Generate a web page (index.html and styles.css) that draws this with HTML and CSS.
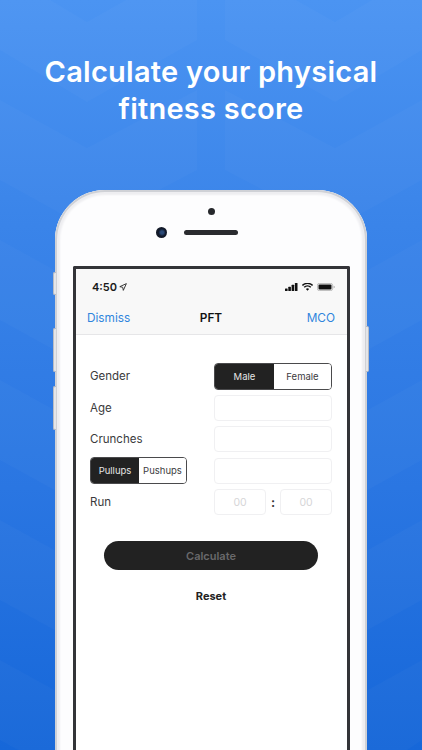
FILE: index.html
```html
<!DOCTYPE html>
<html lang="en">
<head>
<meta charset="utf-8">
<title>PFT</title>
<link rel="stylesheet" href="styles.css">
</head>
<body>
<main class="page">
  <svg class="pattern" viewBox="0 0 422 750" aria-hidden="true">
    <g fill="#fff" fill-opacity=".025">
      <path d="M0-30 87 22 197-40V40L87 102 0 50Z"/>
      <path d="M225-40 335 22 422-30V50L335 102 225 40Z"/>
      <path d="M0 100 87 148 197 90V170L87 228 0 180Z"/>
      <path d="M225 90 335 148 422 100V180L335 228 225 170Z"/>
      <path d="M0 240 87 288 197 230V310L87 368 0 320Z"/>
      <path d="M225 230 335 288 422 240V320L335 368 225 310Z"/>
      <path d="M0 380 87 428 197 370V450L87 508 0 460Z"/>
      <path d="M225 370 335 428 422 380V460L335 508 225 450Z"/>
      <path d="M0 520 87 568 197 510V590L87 648 0 600Z"/>
      <path d="M225 510 335 568 422 520V600L335 648 225 590Z"/>
      <path d="M0 660 87 708 197 650V730L87 788 0 740Z"/>
      <path d="M225 650 335 708 422 660V740L335 798 225 730Z"/>
    </g>
  </svg>

  <h1 class="headline">Calculate your physical<br>fitness score</h1>

  <section class="phone">
    <span class="side-btn side-mute"></span>
    <span class="side-btn side-up"></span>
    <span class="side-btn side-down"></span>
    <span class="side-btn side-power"></span>

    <div class="phone-top">
      <span class="sensor"></span>
      <div class="cam-row">
        <span class="camera"></span>
        <span class="speaker"></span>
      </div>
    </div>

    <div class="screen">
      <header class="chrome">
        <div class="status">
          <span class="time">4:50
            <svg class="loc" viewBox="0 0 10 10" aria-hidden="true"><path d="M9.2.8 1 4.6l3.6.7.8 3.9Z" fill="none" stroke="#222" stroke-width="1.1" stroke-linejoin="round"/></svg>
          </span>
          <span class="status-icons">
            <svg class="signal" viewBox="0 0 13 8" aria-hidden="true"><g fill="#111"><rect x="0" y="5.4" width="2.6" height="2.6" rx=".5"/><rect x="3.3" y="3.8" width="2.6" height="4.2" rx=".5"/><rect x="6.6" y="1.8" width="2.6" height="6.2" rx=".5"/><rect x="9.9" y="0" width="2.6" height="8" rx=".5"/></g></svg>
            <svg class="wifi" viewBox="0 0 12 9" aria-hidden="true"><path d="M6 8.6 4.2 6.7a2.6 2.6 0 0 1 3.6 0ZM2.9 5.4 1.7 4.2a6.2 6.2 0 0 1 8.6 0L9.1 5.4a4.5 4.5 0 0 0-6.2 0ZM.8 3.3-.2 2.1a8.9 8.9 0 0 1 12.4 0l-1 1.2a7.4 7.4 0 0 0-10.4 0Z" fill="#111"/></svg>
            <svg class="battery" viewBox="0 0 18 8" aria-hidden="true"><rect x=".4" y=".4" width="15.2" height="7.2" rx="2" fill="none" stroke="#aaa" stroke-width=".8"/><rect x="1.5" y="1.5" width="13" height="5" rx="1" fill="#111"/><path d="M16.6 2.7c.8.2 1.2.7 1.2 1.3s-.4 1.1-1.2 1.3Z" fill="#aaa"/></svg>
          </span>
        </div>
        <nav class="navbar">
          <a class="nav-link">Dismiss</a>
          <strong class="nav-title">PFT</strong>
          <a class="nav-link nav-right">MCO</a>
        </nav>
      </header>

      <div class="content">
        <form class="form">
          <div class="row">
            <span class="label">Gender</span>
            <div class="seg seg-wide"><span class="seg-on">Male</span><span class="seg-off">Female</span></div>
          </div>
          <div class="row">
            <span class="label">Age</span>
            <div class="field"></div>
          </div>
          <div class="row">
            <span class="label">Crunches</span>
            <div class="field"></div>
          </div>
          <div class="row">
            <div class="seg seg-narrow"><span class="seg-on">Pullups</span><span class="seg-off">Pushups</span></div>
            <div class="field"></div>
          </div>
          <div class="row">
            <span class="label">Run</span>
            <div class="run">
              <div class="field field-time">00</div>
              <span class="colon">:</span>
              <div class="field field-time">00</div>
            </div>
          </div>
        </form>
        <button class="calc" type="button">Calculate</button>
        <button class="reset" type="button">Reset</button>
      </div>
    </div>
  </section>
</main>
</body>
</html>
```
FILE: styles.css
```css
* { box-sizing: border-box; }
html, body { margin: 0; padding: 0; }
body {
  width: 422px;
  height: 750px;
  overflow: hidden;
  font-family: "Inter", "Liberation Sans", sans-serif;
}
.page {
  position: relative;
  width: 422px;
  height: 750px;
  overflow: hidden;
  background: linear-gradient(180deg, #4b94f2 0%, #3a84e9 30%, #2a76e2 65%, #1667d9 100%);
  display: flex;
  flex-direction: column;
  align-items: center;
}
.pattern { position: absolute; inset: 0; width: 422px; height: 750px; }
.headline {
  position: relative;
  flex: none;
  margin: 53px 0 0;
  height: 137px;
  font-size: 29px;
  line-height: 37px;
  font-weight: 600;
  letter-spacing: .25px;
  color: #fff;
  text-align: center;
  white-space: nowrap;
}
.phone {
  position: relative;
  width: 312px;
  height: 600px;
  flex: none;
  padding: 0 17px 0 18px;
  background: #fdfdfe;
  border-radius: 50px 50px 0 0;
  box-shadow: inset 0 0 0 2px #cfd1d6, inset 0 0 2px 5px #eeeef1;
}
.side-btn {
  position: absolute;
  width: 3px;
  background: #e4e5e8;
  border: 1px solid #b9bcc4;
}
.side-mute { left: -2px; top: 82px; height: 23px; border-radius: 2px 0 0 2px; border-right: 0; }
.side-up { left: -2px; top: 138px; height: 44px; border-radius: 2px 0 0 2px; border-right: 0; }
.side-down { left: -2px; top: 196px; height: 44px; border-radius: 2px 0 0 2px; border-right: 0; }
.side-power { right: -2px; top: 136px; height: 46px; border-radius: 0 2px 2px 0; border-left: 0; }
.phone-top {
  height: 76px;
  padding-top: 18px;
  display: flex;
  flex-direction: column;
  align-items: center;
}
.sensor {
  width: 7px;
  height: 7px;
  border-radius: 50%;
  background: #26282c;
}
.cam-row {
  position: relative;
  left: -1px;
  margin-top: 12px;
  display: flex;
  align-items: center;
  gap: 17px;
  margin-left: -27px;
}
.camera {
  width: 11px;
  height: 11px;
  border-radius: 50%;
  background: radial-gradient(circle at 55% 50%, #2b4a78 0 18%, #10182a 45%, #1d2026 100%);
}
.speaker {
  width: 54px;
  height: 5px;
  border-radius: 3px;
  background: #2a2b2f;
}
.screen {
  height: 524px;
  border: 3px solid #333438;
  border-bottom: 0;
  background: #fff;
  border-radius: 2px 2px 0 0;
}
.chrome {
  height: 66px;
  background: #f8f8f8;
  border-bottom: 1px solid #e6e6e8;
}
.status {
  height: 36px;
  padding: 0 12px 0 16px;
  display: flex;
  justify-content: space-between;
  align-items: center;
}
.time {
  font-size: 11px;
  font-weight: 600;
  color: #1a1a1a;
  display: flex;
  align-items: center;
  gap: 2px;
}
.loc { width: 8px; height: 8px; }
.status-icons { display: flex; align-items: center; gap: 4px; }
.signal { width: 13px; height: 8px; }
.wifi { width: 11px; height: 8px; }
.battery { width: 18px; height: 8px; }
.navbar {
  height: 26px;
  padding: 0 12px 0 11px;
  display: grid;
  grid-template-columns: 1fr auto 1fr;
  align-items: center;
  font-size: 11.8px;
}
.nav-link { color: #2f85dd; }
.nav-right { text-align: right; }
.nav-title { font-weight: 600; color: #111; }
.content {
  display: flex;
  flex-direction: column;
  align-items: center;
  padding: 28px 15px 0 14px;
}
.form {
  width: 100%;
  display: flex;
  flex-direction: column;
  gap: 5.5px;
}
.row {
  display: flex;
  justify-content: space-between;
  align-items: center;
  height: 26px;
}
.label { font-size: 11.5px; color: #3a3a3c; }
.seg {
  display: flex;
  height: 27px;
  border: 1px solid #4a4a4c;
  border-radius: 4px;
  overflow: hidden;
  font-size: 9.5px;
}
.seg span { display: flex; align-items: center; justify-content: center; }
.seg-on { background: #222; color: #e6e6e6; }
.seg-off { background: #fff; color: #3c3c3e; }
.seg-wide { width: 118px; }
.seg-wide .seg-on { width: 59px; }
.seg-wide .seg-off { flex: 1; }
.seg-narrow { width: 97px; }
.seg-narrow .seg-on { width: 48px; }
.seg-narrow .seg-off { flex: 1; }
.field {
  width: 118px;
  height: 26px;
  border: 1px solid #f0f0f2;
  border-radius: 4px;
  background: #fff;
}
.run { width: 118px; display: flex; align-items: center; justify-content: space-between; }
.field-time {
  width: 52px;
  display: flex;
  align-items: center;
  justify-content: center;
  font-size: 10.5px;
  color: #d6d6d8;
}
.colon { font-size: 13px; font-weight: 600; color: #333; }
.calc {
  margin-top: 26px;
  width: 214px;
  height: 29px;
  border: 0;
  border-radius: 15px;
  background: #222;
  color: #69696b;
  font: 600 11px "Inter", "Liberation Sans", sans-serif;
}
.reset {
  margin-top: 19px;
  border: 0;
  padding: 0;
  background: none;
  color: #222;
  font: 700 11px "Inter", "Liberation Sans", sans-serif;
}
```
